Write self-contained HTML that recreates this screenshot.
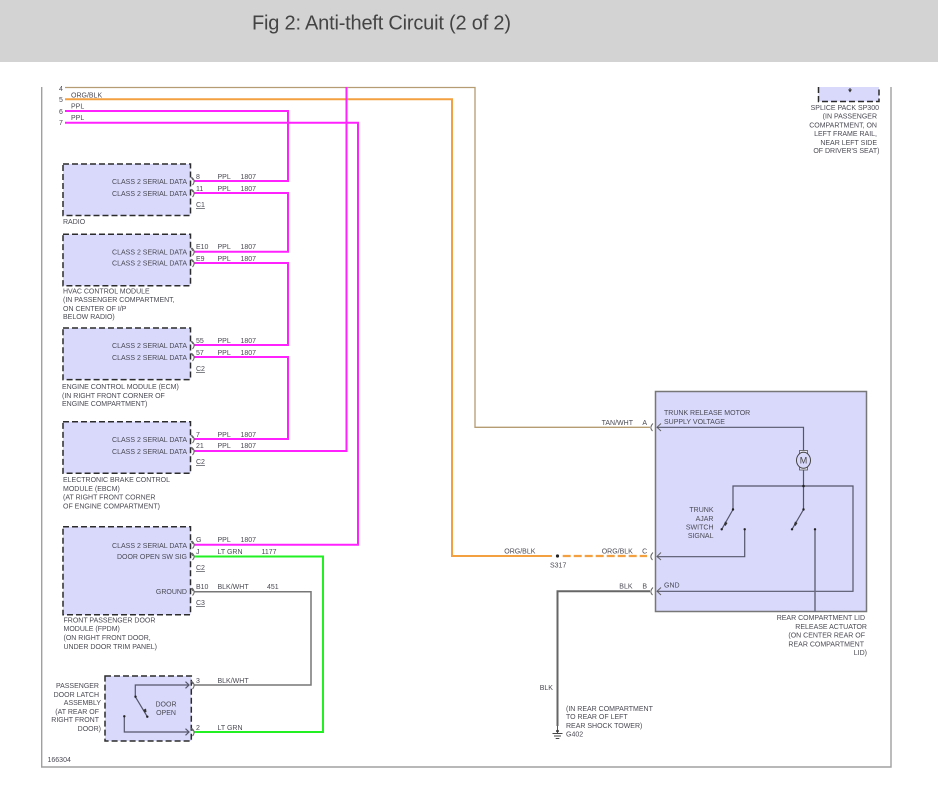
<!DOCTYPE html>
<html><head><meta charset="utf-8"><style>
html,body{margin:0;padding:0;background:#fff}
svg{display:block}
text{font-family:"Liberation Sans",Arial,sans-serif;font-size:7px;fill:#4a4a54}
.e{text-anchor:end}.m{text-anchor:middle}
.u{text-decoration:underline}
.box{fill:#d9d9fc;stroke:#2c2c2c;stroke-width:1.5;stroke-dasharray:6 3}
.w{fill:none;stroke-linejoin:miter}
.mg{stroke:#ff22ff;stroke-width:2}
.gr{stroke:#777;stroke-width:1.5}
.i{fill:none;stroke:#55556a;stroke-width:1.2}
.c{fill:none;stroke:#666;stroke-width:1}
</style></head><body>
<svg width="938" height="787" viewBox="0 0 938 787" xmlns="http://www.w3.org/2000/svg">
<rect width="938" height="787" fill="#fff"/>
<rect width="938" height="62" fill="#d3d3d3"/>
<text x="252" y="29.5" style="font-size:20px;fill:#444" textLength="259" lengthAdjust="spacing">Fig 2: Anti-theft Circuit (2 of 2)</text>

<path d="M41.7 87V767H891V87" fill="none" stroke="#a0a0a0" stroke-width="1.4"/>

<rect class="box" x="63" y="164" width="127.5" height="51.5"/>
<rect class="box" x="63" y="234.3" width="127.5" height="51.4"/>
<rect class="box" x="63" y="328" width="127.5" height="51.6"/>
<rect class="box" x="63" y="421.7" width="127.5" height="51.6"/>
<rect class="box" x="63" y="526.8" width="127.5" height="88"/>
<rect class="box" x="105" y="676" width="86.3" height="65"/>
<path d="M818.5 87V101.5H879V87Z" fill="#d9d9fc" stroke="none"/>
<path d="M818.5 87V101.5H879V87" fill="none" stroke="#2c2c2c" stroke-width="1.5" stroke-dasharray="6 3"/>
<path d="M850 88V92" stroke="#333" stroke-width="1"/><path d="M848 89.5H852L850 92.5Z" fill="#333"/>
<rect x="655.5" y="391.5" width="211" height="220" fill="#d9d9fc" stroke="#777" stroke-width="1.5"/>

<path class="w" d="M65 87.5H475V427.3H650" stroke="#b59c72" stroke-width="1.3"/>
<path class="w" d="M65 99.3H452V556H552" stroke="#f3a040" stroke-width="2"/>
<path class="w" d="M562.7 556H647" stroke="#f3a040" stroke-width="2.2" stroke-dasharray="8 3"/>
<path class="w mg" d="M65 111H288V181H194"/>
<path class="w mg" d="M65 122.7H358V544.7H194"/>
<path class="w mg" d="M346.5 87V451H194"/>
<path class="w mg" d="M194 193H288V251.7H194"/>
<path class="w mg" d="M194 263H288V345H194"/>
<path class="w mg" d="M194 357H288V439H194"/>
<path class="w" d="M194 556.5H323V732H194" stroke="#22f022" stroke-width="2"/>
<path class="w gr" d="M194 591.7H311V685H194"/>
<path class="w" d="M650 591.3H557.5V726" stroke="#666" stroke-width="2"/>

<g class="c">
<path d="M192 177.5Q196 181 192.5 185M191 177l2 3"/>
<path d="M192 189.5Q196 193 192.5 197M191 189l2 3"/>
<path d="M192 248Q196 251.7 192.5 255.5M191 248l2 3"/>
<path d="M192 259.5Q196 263 192.5 267M191 259l2 3"/>
<path d="M192 341.5Q196 345 192.5 349M191 341l2 3"/>
<path d="M192 353.5Q196 357 192.5 361M191 353l2 3"/>
<path d="M192 435.5Q196 439 192.5 443M191 435l2 3"/>
<path d="M192 447.5Q196 451 192.5 455M191 447l2 3"/>
<path d="M192 541Q196 544.7 192.5 548.5M191 541l2 3"/>
<path d="M192 553Q196 556.5 192.5 560M191 553l2 3"/>
<path d="M192 588Q196 591.7 192.5 595.5M191 588l2 3"/>
<path d="M192 681.5Q196 685 192.5 689M191 681l2 3"/>
<path d="M192 728.5Q196 732 192.5 736M191 728l2 3"/>
<path d="M653 423.5Q649 427.3 652.5 431M661 423.5L657 427.3L661 431"/>
<path d="M653 552.5Q649 556.5 652.5 560M661 552.5L657 556.5L661 560"/>
<path d="M653 587.5Q649 591.3 652.5 595M661 587.5L657 591.3L661 595"/>
</g>

<!-- latch internals -->
<path class="i" d="M189 685H135.3V696.7L147.3 716.7"/>
<path class="i" d="M124.3 716.3V732H189"/>
<path class="i" d="M185.5 681.7L189 685L185.5 688.3M185.5 728.7L189 732L185.5 735.3"/>
<path d="M143 710L146 708.5L146.5 712L144.5 712.5Z" fill="#333"/>
<circle cx="135.5" cy="696.7" r="1.2" fill="#222"/><circle cx="147.3" cy="716.7" r="1.2" fill="#222"/><circle cx="124.3" cy="716.3" r="1.2" fill="#222"/>

<!-- trunk internals -->
<path class="i" d="M657 427.3H803.5V452M803.5 469V509.5L792 529.3"/>
<path class="i" d="M733 509.5V486H853V591.3H657"/>
<path class="i" d="M733 509.5L721.7 529.3"/>
<path class="i" d="M744.7 529.3V556.7H657"/>
<path d="M815 529.3V612" fill="none" stroke="#6a6a80" stroke-width="1.5"/>
<circle cx="803.5" cy="486" r="1.3" fill="#222"/>
<circle cx="803.5" cy="509.5" r="1.2" fill="#222"/><circle cx="733" cy="509.5" r="1.2" fill="#222"/>
<circle cx="792" cy="529.3" r="1.2" fill="#222"/><circle cx="721.7" cy="529.3" r="1.2" fill="#222"/>
<circle cx="744.7" cy="529.3" r="1.2" fill="#222"/><circle cx="815" cy="529.3" r="1.2" fill="#222"/>
<path d="M725 521.5l2.5 1.5-2 3-1.5-1.5ZM795 521.5l2.5 1.5-2 3-1.5-1.5Z" fill="#333"/>
<rect x="799.5" y="450.5" width="8" height="3" fill="#e8e8f8" stroke="#555" stroke-width=".8"/>
<rect x="799.5" y="467" width="8" height="3" fill="#e8e8f8" stroke="#555" stroke-width=".8"/>
<ellipse cx="803.5" cy="460.3" rx="7" ry="8" fill="#d9d9fc" stroke="#444" stroke-width="1"/>
<text class="m" x="803.5" y="463.5" style="font-size:9px;fill:#444">M</text>

<!-- splice + ground -->
<circle cx="557.5" cy="556" r="1.6" fill="#222"/>
<circle cx="557.5" cy="731" r="1.3" fill="#222"/>
<path d="M557.5 726V733M552.5 733.5H562.5M554 736H561M555.7 738.5H559.3" stroke="#444" stroke-width=".9" fill="none"/>

<!-- top wire labels -->
<text x="59" y="91">4</text><text x="59" y="102">5</text><text x="59" y="114">6</text><text x="59" y="125">7</text>
<text x="71" y="97.5">ORG/BLK</text><text x="71" y="108.5">PPL</text><text x="71" y="120">PPL</text>

<!-- class 2 labels -->
<text class="e" x="187" y="184">CLASS 2 SERIAL DATA</text><text class="e" x="187" y="196">CLASS 2 SERIAL DATA</text>
<text class="e" x="187" y="254.5">CLASS 2 SERIAL DATA</text><text class="e" x="187" y="265.5">CLASS 2 SERIAL DATA</text>
<text class="e" x="187" y="348">CLASS 2 SERIAL DATA</text><text class="e" x="187" y="360">CLASS 2 SERIAL DATA</text>
<text class="e" x="187" y="442">CLASS 2 SERIAL DATA</text><text class="e" x="187" y="454">CLASS 2 SERIAL DATA</text>
<text class="e" x="187" y="548">CLASS 2 SERIAL DATA</text><text class="e" x="187" y="559">DOOR OPEN SW SIG</text>
<text class="e" x="187" y="594">GROUND</text>

<!-- pins -->
<text x="196" y="179">8</text><text x="217.5" y="179">PPL</text><text x="240.5" y="179">1807</text>
<text x="196" y="191">11</text><text x="217.5" y="191">PPL</text><text x="240.5" y="191">1807</text>
<text x="196" y="249">E10</text><text x="217.5" y="249">PPL</text><text x="240.5" y="249">1807</text>
<text x="196" y="261">E9</text><text x="217.5" y="261">PPL</text><text x="240.5" y="261">1807</text>
<text x="196" y="343">55</text><text x="217.5" y="343">PPL</text><text x="240.5" y="343">1807</text>
<text x="196" y="355">57</text><text x="217.5" y="355">PPL</text><text x="240.5" y="355">1807</text>
<text x="196" y="437">7</text><text x="217.5" y="437">PPL</text><text x="240.5" y="437">1807</text>
<text x="196" y="448">21</text><text x="217.5" y="448">PPL</text><text x="240.5" y="448">1807</text>
<text x="196" y="542">G</text><text x="217.5" y="542">PPL</text><text x="240.5" y="542">1807</text>
<text x="196" y="554">J</text><text x="217.5" y="554">LT GRN</text><text x="261.5" y="554">1177</text>
<text x="196" y="589">B10</text><text x="217.5" y="589">BLK/WHT</text><text x="267" y="589">451</text>
<text x="196" y="683">3</text><text x="217.5" y="683">BLK/WHT</text>
<text x="196" y="730">2</text><text x="217.5" y="730">LT GRN</text>
<text class="u" x="196" y="207">C1</text><text class="u" x="196" y="371">C2</text><text class="u" x="196" y="464">C2</text><text class="u" x="196" y="570">C2</text><text class="u" x="196" y="605">C3</text>

<!-- module captions -->
<text x="63" y="224">RADIO</text>
<text x="63" y="293.5">HVAC CONTROL MODULE</text><text x="63" y="302">(IN PASSENGER COMPARTMENT,</text><text x="63" y="311">ON CENTER OF I/P</text><text x="63" y="319">BELOW RADIO)</text>
<text x="62" y="389">ENGINE CONTROL MODULE (ECM)</text><text x="62" y="398">(IN RIGHT FRONT CORNER OF</text><text x="62" y="406">ENGINE COMPARTMENT)</text>
<text x="63" y="482">ELECTRONIC BRAKE CONTROL</text><text x="63" y="491">MODULE (EBCM)</text><text x="63" y="499.5">(AT RIGHT FRONT CORNER</text><text x="63" y="508.5">OF ENGINE COMPARTMENT)</text>
<text x="63.5" y="622.5">FRONT PASSENGER DOOR</text><text x="63.5" y="631">MODULE (FPDM)</text><text x="63.5" y="640">(ON RIGHT FRONT DOOR,</text><text x="63.5" y="649">UNDER DOOR TRIM PANEL)</text>
<text class="e" x="99" y="688">PASSENGER</text><text class="e" x="99" y="697">DOOR LATCH</text><text class="e" x="101" y="705">ASSEMBLY</text><text class="e" x="99" y="714">(AT REAR OF</text><text class="e" x="99" y="722">RIGHT FRONT</text><text class="e" x="101" y="731">DOOR)</text>
<text class="m" x="166" y="706.5">DOOR</text><text class="m" x="166" y="715">OPEN</text>
<text x="47.5" y="762">166304</text>

<!-- splice pack caption -->
<text class="e" x="879" y="110">SPLICE PACK SP300</text><text class="e" x="877" y="118.5">(IN PASSENGER</text><text class="e" x="877" y="127.5">COMPARTMENT, ON</text><text class="e" x="877" y="136">LEFT FRAME RAIL,</text><text class="e" x="877" y="145">NEAR LEFT SIDE</text><text class="e" x="879.5" y="153">OF DRIVER'S SEAT)</text>

<!-- right side -->
<text class="e" x="633" y="425">TAN/WHT</text><text class="m" x="644.7" y="425">A</text>
<text x="504.3" y="553.5">ORG/BLK</text><text x="601.7" y="553.5">ORG/BLK</text><text class="m" x="644.7" y="553.5">C</text>
<text x="619.3" y="588.5">BLK</text><text class="m" x="644.7" y="588.5">B</text>
<text x="550" y="567.7">S317</text>
<text x="539.7" y="690">BLK</text>
<text x="566" y="711">(IN REAR COMPARTMENT</text><text x="566" y="719">TO REAR OF LEFT</text><text x="566" y="728">REAR SHOCK TOWER)</text><text x="566" y="736.5">G402</text>
<text x="664" y="415">TRUNK RELEASE MOTOR</text><text x="664" y="424">SUPPLY VOLTAGE</text><text x="664" y="587.5">GND</text>
<text class="e" x="713.5" y="512">TRUNK</text><text class="e" x="713.5" y="521">AJAR</text><text class="e" x="713.5" y="529.5">SWITCH</text><text class="e" x="713.5" y="538">SIGNAL</text>
<text class="e" x="865" y="620">REAR COMPARTMENT LID</text><text class="e" x="867" y="629">RELEASE ACTUATOR</text><text class="e" x="865" y="637.5">(ON CENTER REAR OF</text><text class="e" x="864" y="646.5">REAR COMPARTMENT</text><text class="e" x="867" y="655">LID)</text>
</svg>
</body></html>
